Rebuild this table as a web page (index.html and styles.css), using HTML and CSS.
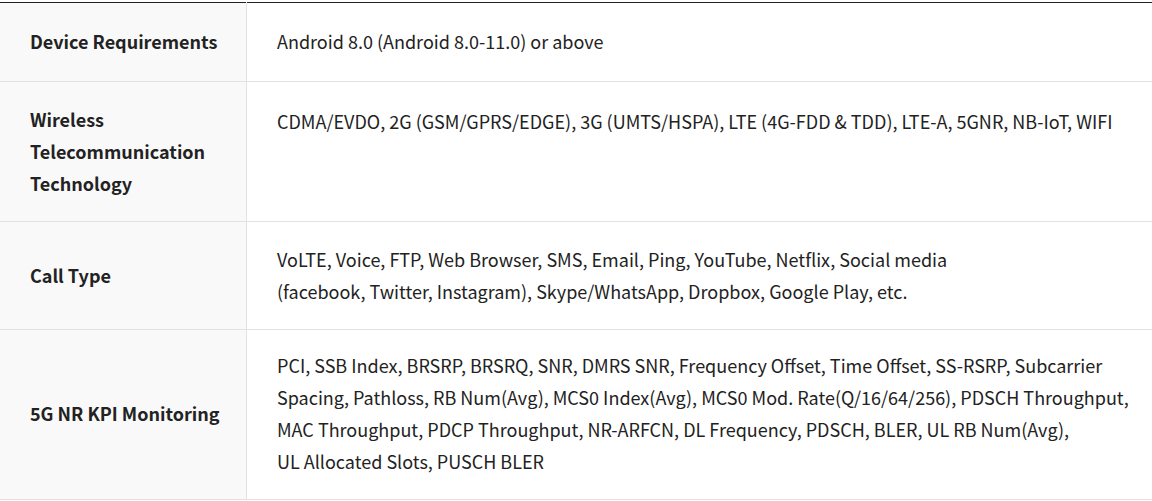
FILE: index.html
```html
<!DOCTYPE html>
<html>
<head>
<meta charset="utf-8">
<link rel="stylesheet" href="styles.css">
</head>
<body>
<table class="spec">
  <tbody>
    <tr class="row-1">
      <th>Device Requirements</th>
      <td>Android 8.0 (Android 8.0-11.0) or above</td>
    </tr>
    <tr class="row-2">
      <th>Wireless<br>Telecommunication<br>Technology</th>
      <td>CDMA/EVDO, 2G (GSM/GPRS/EDGE), 3G (UMTS/HSPA), LTE (4G-FDD &amp; TDD), LTE-A, 5GNR, NB-IoT, WIFI</td>
    </tr>
    <tr class="row-3">
      <th>Call Type</th>
      <td>VoLTE, Voice, FTP, Web Browser, SMS, Email, Ping, YouTube, Netflix, Social media<br>(facebook, Twitter, Instagram), Skype/WhatsApp, Dropbox, Google Play, etc.</td>
    </tr>
    <tr class="row-4">
      <th>5G NR KPI Monitoring</th>
      <td>PCI, SSB Index, BRSRP, BRSRQ, SNR, DMRS SNR, Frequency Offset, Time Offset, SS-RSRP, Subcarrier Spacing, Pathloss, RB Num(Avg), MCS0 Index(Avg), MCS0 Mod. Rate(Q/16/64/256), PDSCH Throughput, MAC Throughput, PDCP Throughput, NR-ARFCN, DL Frequency, PDSCH, BLER, UL RB Num(Avg),<br>UL Allocated Slots, PUSCH BLER</td>
    </tr>
  </tbody>
</table>
</body>
</html>
```
FILE: styles.css
```css
html, body {
  margin: 0;
  padding: 0;
  background: #fff;
}
body {
  padding-top: 2px;
  font-family: "Noto Sans CJK KR", "Source Sans Pro", "Noto Sans", sans-serif;
  font-size: 18px;
  line-height: 32px;
  color: #222;
}
.spec {
  width: 1152px;
  table-layout: fixed;
  border-collapse: collapse;
  border-top: 1px solid #222;
}
.spec tr {
  border-bottom: 1px solid #e2e2e2;
}
.spec th {
  width: 186px;
  background: #f9f9f9;
  border-right: 1px solid #e2e2e2;
  text-align: left;
  font-weight: 700;
  padding: 21px 30px 22px;
  vertical-align: middle;
  white-space: nowrap;
}
.spec td {
  padding: 21px 20px 22px 30px;
  font-weight: 400;
  vertical-align: middle;
}
.row-1 th, .row-1 td {
  padding-top: 22px;
  padding-bottom: 24px;
}
.row-2 td {
  vertical-align: top;
  padding-top: 23px;
}
.row-4 th, .row-4 td {
  padding-top: 19px;
  padding-bottom: 22px;
}
```
